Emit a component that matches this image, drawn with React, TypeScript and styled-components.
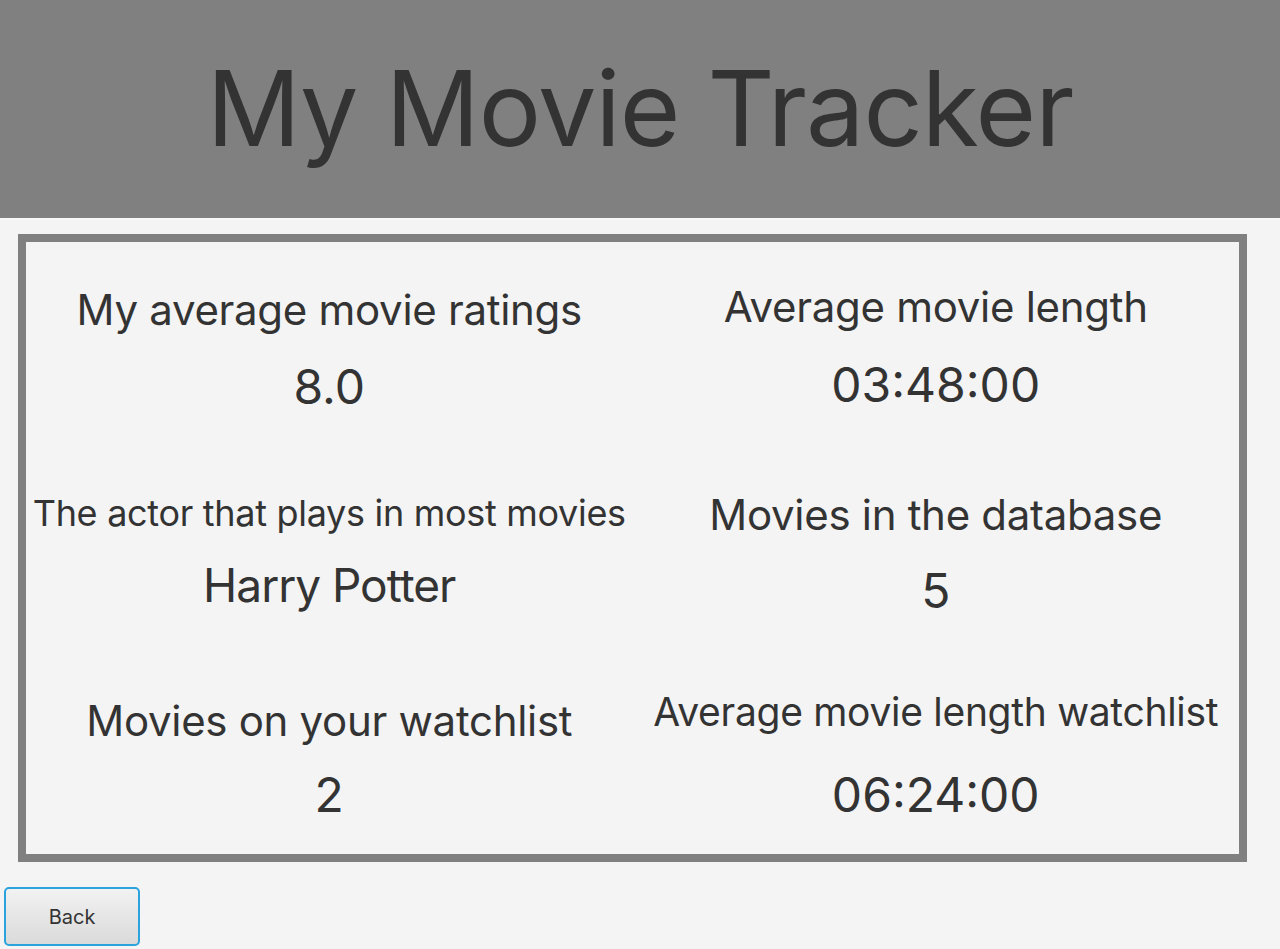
import styled, { createGlobalStyle } from "styled-components";

type Stat = {
  label: string;
  value: string;
  labelSize: number;
  valueSize: number;
  top: number;
  gap: number;
  tight?: boolean;
};

const stats: Stat[] = [
  { label: "My average movie ratings", value: "8.0", labelSize: 42, valueSize: 48, top: 43, gap: 23 },
  { label: "Average movie length", value: "03:48:00", labelSize: 42, valueSize: 48, top: 40, gap: 24 },
  { label: "The actor that plays in most movies", value: "Harry Potter", labelSize: 36, valueSize: 46, top: 46, gap: 23, tight: true },
  { label: "Movies in the database", value: "5", labelSize: 42, valueSize: 48, top: 44, gap: 22 },
  { label: "Movies on your watchlist", value: "2", labelSize: 42, valueSize: 48, top: 46, gap: 20 },
  { label: "Average movie length watchlist", value: "06:24:00", labelSize: 39, valueSize: 48, top: 39, gap: 30 },
];

const App = (): JSX.Element => {
  return (
    <>
      <GlobalStyle />
      <Page>
        <Header>
          <Title>My Movie Tracker</Title>
        </Header>
        <Body>
          <StatsBox>
            {stats.map((stat) => (
              <StatCell key={stat.label} $top={stat.top} $gap={stat.gap}>
                <StatLabel $size={stat.labelSize}>{stat.label}</StatLabel>
                <StatValue $size={stat.valueSize} $tight={stat.tight}>
                  {stat.value}
                </StatValue>
              </StatCell>
            ))}
          </StatsBox>
          <BackButton>Back</BackButton>
        </Body>
      </Page>
    </>
  );
};

export default App;

const GlobalStyle = createGlobalStyle`
  html, body {
    margin: 0;
    padding: 0;
    background: #f4f4f4;
  }

  body {
    font-family: Inter, "Noto Sans", sans-serif;
    color: #333333;
  }
`;

const Page = styled.div`
  width: 1280px;
  height: 949px;
  background: #f4f4f4;
  overflow: hidden;
`;

const Header = styled.header`
  height: 216px;
  padding-bottom: 2px;
  background: #808080;
  border-bottom: 2px solid #f8f8f8;
  display: flex;
  align-items: center;
  justify-content: center;
`;

const Title = styled.h1`
  margin: 0;
  font-size: 104px;
  font-weight: 400;
  letter-spacing: -1px;
  color: #333333;
`;

const Body = styled.main`
  padding: 14px 33px 0 18px;
`;

const StatsBox = styled.section`
  border: 8px solid #808080;
  display: grid;
  grid-template-columns: 1fr 1fr;
  grid-template-rows: repeat(3, 204px);
`;

const StatCell = styled.div<{ $top: number; $gap: number }>`
  display: flex;
  flex-direction: column;
  align-items: center;
  justify-content: flex-start;
  padding-top: ${({ $top }) => $top}px;
  gap: ${({ $gap }) => $gap}px;
`;

const StatLabel = styled.div<{ $size: number }>`
  font-size: ${({ $size }) => $size}px;
  line-height: 1.2;
  white-space: nowrap;
  letter-spacing: -0.3px;
`;

const StatValue = styled.div<{ $size: number; $tight?: boolean }>`
  font-size: ${({ $size }) => $size}px;
  line-height: 1.2;
  white-space: nowrap;
  letter-spacing: ${({ $tight }) => ($tight ? "-1px" : "0")};
`;

const BackButton = styled.button`
  margin: 25px 0 0 -14px;
  width: 136px;
  height: 59px;
  border: 2px solid #2ba4dd;
  border-radius: 5px;
  background: linear-gradient(#f2f2f2, #dadada);
  font-family: Inter, "Noto Sans", sans-serif;
  font-size: 20px;
  color: #333333;
`;
